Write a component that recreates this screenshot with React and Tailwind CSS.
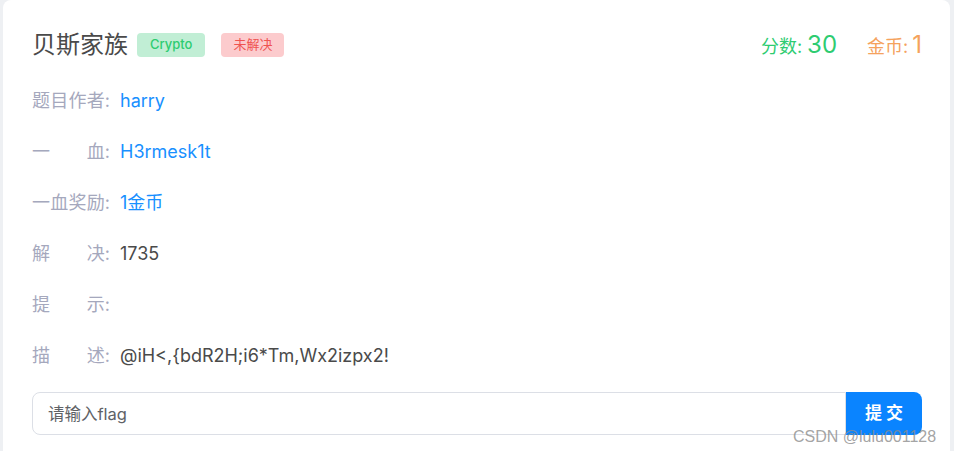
import React from 'react'

const rows = [
  { label: ['题', '目', '作', '者'], value: 'harry', tone: 'text-[#1890ff]' },
  { label: ['一', '血'], value: 'H3rmesk1t', tone: 'text-[#1890ff]' },
  { label: ['一', '血', '奖', '励'], value: '1金币', tone: 'text-[#1890ff]' },
  { label: ['解', '决'], value: '1735', tone: 'text-[#4a4a4a]' },
  { label: ['提', '示'], value: '', tone: 'text-[#4a4a4a]' },
  { label: ['描', '述'], value: '@iH<,{bdR2H;i6*Tm,Wx2izpx2!', tone: 'text-[#4a4a4a]' },
]

const font = "font-['Inter','Noto_Sans_CJK_SC',sans-serif]"

export default function App() {
  return (
    <div className={`relative w-[954px] h-[451px] overflow-hidden bg-[#eef0f3] pl-[3px] pr-[4px] ${font}`}>
      <div className="h-[470px] bg-white rounded-lg pt-[20px] pl-[29px] pr-[28px]">
        {/* header */}
        <div className="h-[50px] flex items-center justify-between">
          <div className="flex items-center">
            <h2 className="text-[24px] text-[#4a4a4a] leading-none">贝斯家族</h2>
            <span className="ml-[9px] h-[24px] px-[13px] flex items-center rounded bg-[#c1eed5] text-[#2ecc71] text-[13px] font-medium">Crypto</span>
            <span className="ml-[16px] h-[24px] px-[12px] flex items-center rounded bg-[#fccbcd] text-[#ef5350] text-[13px]">未解决</span>
          </div>
          <div className="flex items-baseline">
            <span className="text-[#2ecc71] text-[18px]">分数:</span>
            <span className="text-[#2ecc71] text-[24px] ml-[5px]">30</span>
            <span className="text-[#f5a25d] text-[18px] ml-[30px]">金币:</span>
            <span className="text-[#f5a25d] text-[24px] ml-[4px]">1</span>
          </div>
        </div>

        {/* info rows */}
        <div className="mt-[5px]">
          {rows.map((row, i) => (
            <div key={i} className="h-[51px] flex items-center text-[18px]">
              <div className="w-[78px] flex text-[#a5a8bd]">
                <span className="flex-1 flex justify-between">
                  {row.label.map((c, j) => <span key={j}>{c}</span>)}
                </span>
                <span>:</span>
              </div>
              <span className={`ml-[10px] ${row.tone}`}>{row.value}</span>
            </div>
          ))}
        </div>

        {/* flag form */}
        <div className="mt-[11px] flex h-[43px]">
          <input
            type="text"
            placeholder="请输入flag"
            className="flex-1 h-full border border-[#dcdfe6] rounded-l-lg px-[15px] text-[16.5px] outline-none placeholder:text-[#606266]"
          />
          <button className="w-[76px] h-full bg-[#0a84ff] text-white font-bold text-[17px] tracking-[4px] rounded-r-lg pl-[4px]">
            提交
          </button>
        </div>
      </div>

      {/* watermark */}
      <div className="absolute left-[793px] top-[425px] text-[16px] text-[#8c8c8c]/80 font-['Liberation_Sans',sans-serif]">
        CSDN @lulu001128
      </div>
    </div>
  )
}
